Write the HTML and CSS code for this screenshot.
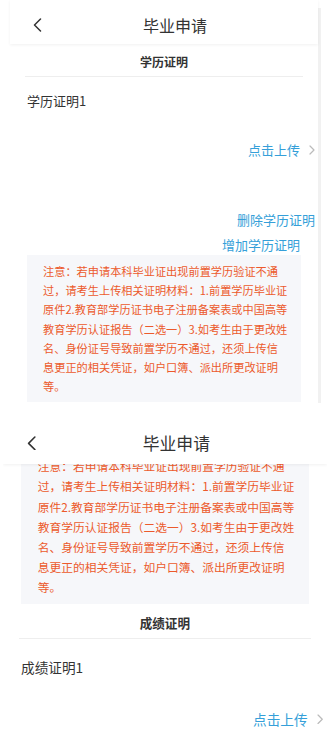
FILE: index.html
```html
<!DOCTYPE html>
<html lang="zh-CN">
<head>
    <meta charset="UTF-8">
    <meta name="viewport" content="width=device-width, initial-scale=1.0">
    <title>毕业申请</title>
    <link rel="stylesheet" href="styles.css">
</head>
<body>
    <div class="screen">
        <header class="nav">
            <button class="back" aria-label="返回">
                <svg width="9" height="14" viewBox="0 0 9 14"><polyline points="7.5,1 1.5,7 7.5,13" fill="none" stroke="#333" stroke-width="1.5" stroke-linecap="round" stroke-linejoin="round"/></svg>
            </button>
            <h1>毕业申请</h1>
        </header>

        <div class="page">
            <div class="section-head">学历证明</div>
            <div class="item-label">学历证明1</div>
            <div class="upload">
                <span>点击上传</span>
                <svg width="6" height="10" viewBox="0 0 6 10"><polyline points="1,1 5,5 1,9" fill="none" stroke="#bbb" stroke-width="1.2" stroke-linecap="round" stroke-linejoin="round"/></svg>
            </div>
            <div class="actions">
                <a class="link-del">删除学历证明</a>
                <a class="link-add">增加学历证明</a>
            </div>
            <div class="notice">
                <p>注意：若申请本科毕业证出现前置学历验证不通过，请考生上传相关证明材料：1.前置学历毕业证原件2.教育部学历证书电子注册备案表或中国高等教育学历认证报告（二选一）3.如考生由于更改姓名、身份证号导致前置学历不通过，还须上传信息更正的相关凭证，如户口簿、派出所更改证明等。</p>
            </div>
        </div>
    </div>

    <!-- same page, scrolled down a bit -->
    <div class="screen screen-scrolled">
        <header class="nav">
            <button class="back" aria-label="返回">
                <svg width="9" height="14" viewBox="0 0 9 14"><polyline points="7.5,1 1.5,7 7.5,13" fill="none" stroke="#333" stroke-width="1.5" stroke-linecap="round" stroke-linejoin="round"/></svg>
            </button>
            <h1>毕业申请</h1>
        </header>

        <div class="page">
            <div class="notice">
                <p>注意：若申请本科毕业证出现前置学历验证不通过，请考生上传相关证明材料：1.前置学历毕业证原件2.教育部学历证书电子注册备案表或中国高等教育学历认证报告（二选一）3.如考生由于更改姓名、身份证号导致前置学历不通过，还须上传信息更正的相关凭证，如户口簿、派出所更改证明等。</p>
            </div>
            <div class="section-head">成绩证明</div>
            <div class="item-label">成绩证明1</div>
            <div class="upload">
                <span>点击上传</span>
                <svg width="6" height="10" viewBox="0 0 6 10"><polyline points="1,1 5,5 1,9" fill="none" stroke="#bbb" stroke-width="1.2" stroke-linecap="round" stroke-linejoin="round"/></svg>
            </div>
        </div>
    </div>
</body>
</html>
```

FILE: styles.css
```css
html, body {
    height: 100%;
    overflow: hidden;
}

body {
    margin: 0;
    font-family: "Noto Sans CJK SC", "Noto Sans", sans-serif;
    background-color: #fff;
    color: #333;
}

.screen {
    position: relative;
    width: 308px;
    margin-left: 10px;
    padding-bottom: 1px;
    background-color: #fff;
}

.screen::after {
    content: "";
    position: absolute;
    top: 8px;
    bottom: 0;
    right: -3px;
    width: 3px;
    background-color: #f1f1f1;
}

.nav {
    position: relative;
    z-index: 1;
    display: flex;
    align-items: center;
    box-sizing: border-box;
    height: 44px;
    padding: 5px 0 0 23px;
    background-color: #fff;
    box-shadow: 0 1px 3px rgba(0, 0, 0, 0.06);
}

.back {
    display: flex;
    padding: 0;
    border: none;
    background: none;
    cursor: pointer;
}

.nav h1 {
    flex: 1;
    margin: 0;
    padding-right: 10px;
    text-align: center;
    font-size: 16px;
    font-weight: 400;
    line-height: 22px;
    color: #333;
}

.page {
    overflow: hidden;
}

.section-head {
    margin: 0 15px;
    padding: 9px 0 5px;
    text-align: center;
    font-size: 12px;
    font-weight: 700;
    line-height: 18px;
    color: #333;
    border-bottom: 1px solid #eee;
}

.item-label {
    padding: 15px 17px 0;
    font-size: 13px;
    line-height: 18px;
    color: #333;
}

.upload {
    display: flex;
    justify-content: flex-end;
    align-items: center;
    gap: 9px;
    margin-top: 31px;
    padding-right: 3px;
    font-size: 13px;
    line-height: 18px;
    color: #359fd9;
    cursor: pointer;
}

.actions {
    display: flex;
    flex-direction: column;
    align-items: flex-end;
    gap: 7px;
    margin-top: 52px;
    padding-right: 3px;
    font-size: 13px;
    line-height: 18px;
}

.actions a {
    color: #359fd9;
    cursor: pointer;
}

.link-add {
    margin-right: 15px;
}

.notice {
    margin: 1px 17px 0;
    padding: 7px 13px 6px 16px;
    background-color: #f6f7fa;
}

.notice p {
    margin: 0;
    font-size: 11.2px;
    line-height: 19.2px;
    color: #ec5a2c;
}

/* second capture is slightly bigger and scrolled */
.screen-scrolled {
    zoom: 1.05;
    height: 322px;
    margin: 13.3px 0 0 3px;
    overflow: hidden;
}

.screen-scrolled .notice {
    margin-top: -14px;
}

.screen-scrolled .section-head {
    padding-top: 10px;
}

.screen-scrolled .item-label {
    padding-top: 18px;
}
```
